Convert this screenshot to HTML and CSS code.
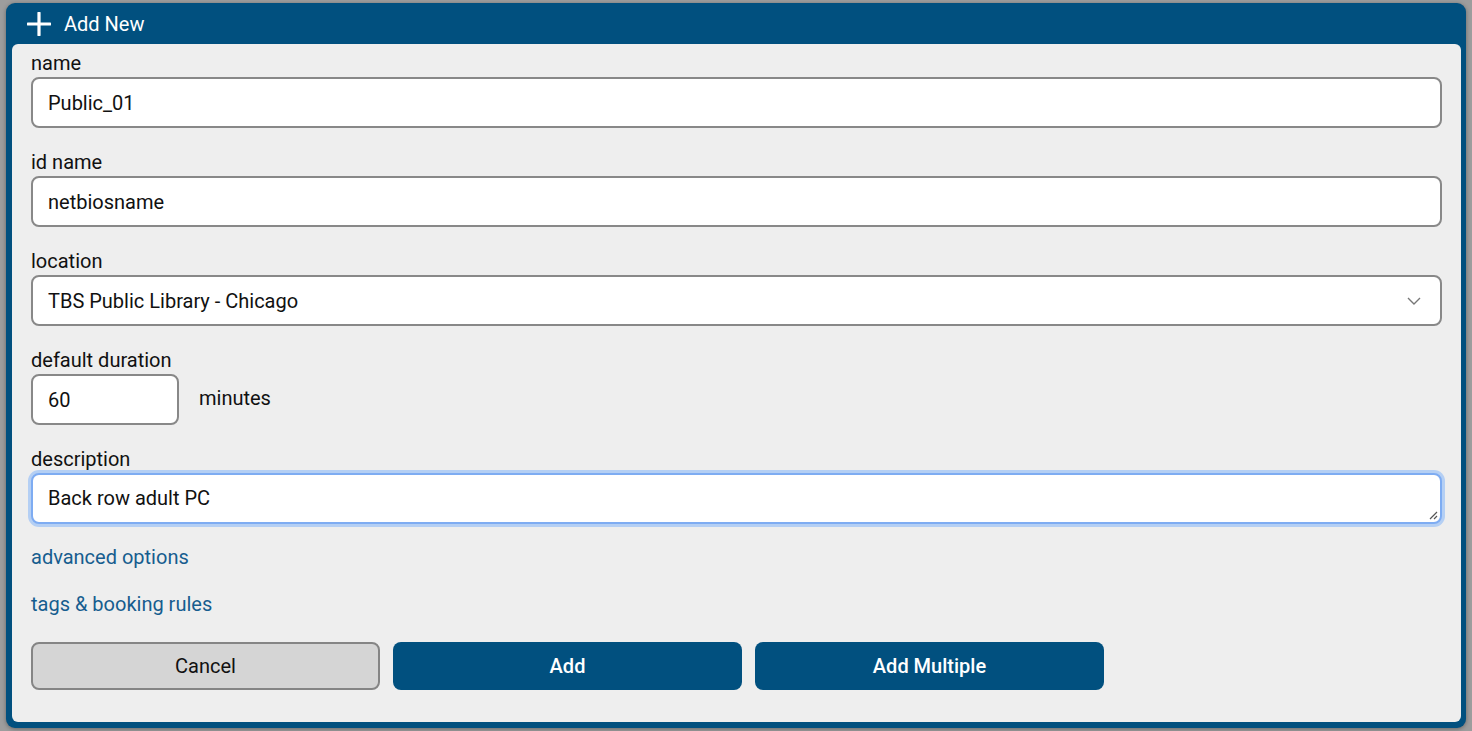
FILE: index.html
```html
<!DOCTYPE html>
<html>
<head>
<meta charset="utf-8">
<title>Add New</title>
<link rel="stylesheet" href="styles.css">
</head>
<body>
<div class="dialog">
	<div class="dialog-head">
		<svg class="icon-plus" width="24" height="24" viewBox="0 0 24 24">
			<path d="M12 1v22M1 12h22" stroke="#fff" stroke-width="3.2" stroke-linecap="round" fill="none"/>
		</svg>
		<span>Add New</span>
	</div>
	<form class="dialog-body">
		<div class="field">
			<label for="f-name">name</label>
			<input type="text" id="f-name" class="txt" value="Public_01">
		</div>
		<div class="field">
			<label for="f-id">id name</label>
			<input type="text" id="f-id" class="txt" value="netbiosname">
		</div>
		<div class="field">
			<label for="f-loc">location</label>
			<div class="select">
				<span>TBS Public Library - Chicago</span>
				<svg width="14" height="8" viewBox="0 0 14 8">
					<path d="M1 1l6 6 6-6" stroke="#777" stroke-width="1.4" fill="none"/>
				</svg>
			</div>
		</div>
		<div class="field">
			<label for="f-dur">default duration</label>
			<div class="duration">
				<input type="text" id="f-dur" class="txt short" value="60">
				<span>minutes</span>
			</div>
		</div>
		<div class="field desc">
			<label for="f-desc">description</label>
			<div class="txt focus">
				Back row adult PC
				<svg class="grip" width="10" height="10" viewBox="0 0 10 10">
					<path d="M9 2L2 9M9 6L6 9" stroke="#555" stroke-width="1.2"/>
				</svg>
			</div>
		</div>
		<a class="more" href="#">advanced options</a>
		<a class="more" href="#">tags &amp; booking rules</a>
		<div class="buttons">
			<button type="button" class="btn cancel">Cancel</button>
			<button type="button" class="btn primary">Add</button>
			<button type="button" class="btn primary">Add Multiple</button>
		</div>
	</form>
</div>
</body>
</html>
```

FILE: styles.css
```css
html, body {
	margin: 0;
	padding: 0;
}
body {
	background: #9d9d9d;
	font-family: Roboto, "Liberation Sans", sans-serif;
	font-size: 20px;
	color: #111;
	padding: 3px 6px;
	height: 731px;
	box-sizing: border-box;
}
.dialog {
	width: 1460px;
	height: 725px;
	background: #01507f;
	border-radius: 9px;
	display: flex;
	flex-direction: column;
	box-shadow: 0 1px 4px rgba(0,0,0,0.35);
}
.dialog-head {
	height: 41px;
	display: flex;
	align-items: center;
	padding-left: 21px;
	color: #fff;
	gap: 13px;
}
.icon-plus {
	display: block;
}
.dialog-body {
	flex: 1;
	margin: 0 5px 6px 6px;
	background: #eeeeee;
	border-radius: 6px;
	padding: 7px 19px 0 19px;
}
.field {
	margin-bottom: 22px;
}
.field.desc {
	margin-bottom: 21px;
}
.field label {
	display: block;
	line-height: 24px;
	margin-bottom: 2px;
}
.txt, .select {
	display: block;
	box-sizing: border-box;
	width: 1411px;
	height: 51px;
	border: 2px solid #888;
	border-radius: 8px;
	background: #fff;
	font: inherit;
	color: #111;
	padding: 0 15px;
	margin: 0;
	outline: none;
}
.select {
	display: flex;
	align-items: center;
	justify-content: space-between;
	padding-right: 19px;
}
.duration {
	display: flex;
	align-items: center;
	gap: 20px;
}
.duration span {
	margin-bottom: 3px;
}
.txt.short {
	width: 148px;
}
.txt.focus {
	position: relative;
	display: flex;
	align-items: center;
	padding-bottom: 2px;
	border-color: #7eacf2;
	box-shadow: 0 0 0 3px #b4cff4;
}
.grip {
	position: absolute;
	right: 2px;
	bottom: 2px;
}
a.more {
	display: block;
	width: max-content;
	color: #165d8f;
	text-decoration: none;
	line-height: 24px;
	margin-bottom: 23px;
}
.buttons {
	display: flex;
	gap: 13px;
	margin-top: 26px;
}
.btn {
	width: 349px;
	height: 48px;
	font: inherit;
	border-radius: 8px;
	cursor: pointer;
	margin: 0;
}
.btn.cancel {
	background: #d5d5d5;
	border: 2px solid #858585;
	color: #111;
}
.btn.primary {
	background: #01507f;
	border: 0;
	color: #fff;
	font-weight: 500;
}
```
